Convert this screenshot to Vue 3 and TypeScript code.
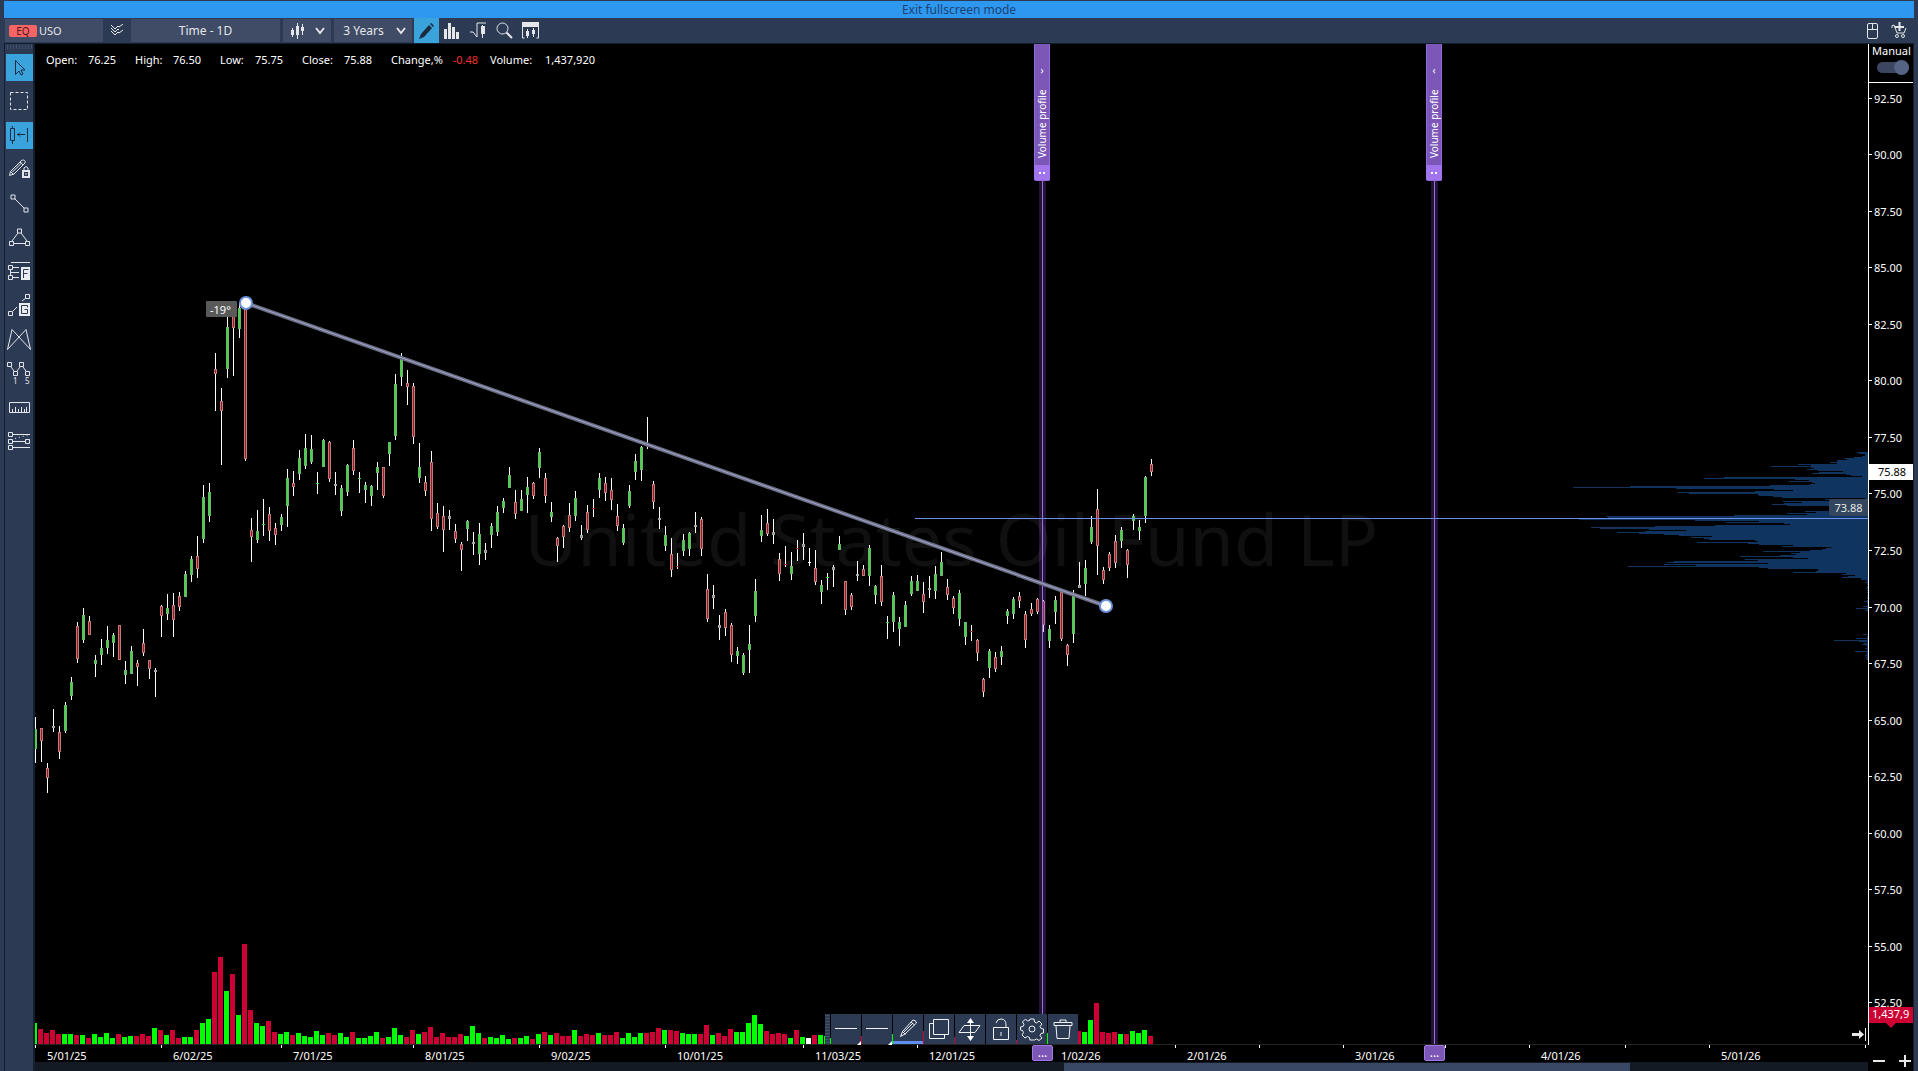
<script setup lang="ts">
import { ref } from 'vue'

interface Candle { x: number; kind: string; high: number; top: number; bottom: number; low: number }
interface VolumeBar { x: number; kind: string; height: number }

const STEP = 6
const FIRST_X = 35
const VOLUME_BASE = 1044

// kind, high, body top, body bottom, low - u: up, d: down, n: neutral, w: unchanged
const candleRows = `
u 717 729 749 763|d 728 728 741 762|d 763 768 778 793|n 709 726 728 732|d 726 732 752 759|u 702 705 731 733
u 677 682 696 700|d 622 626 659 663|u 608 615 640 643|d 616 621 635 635|u 655 660 664 677|u 639 648 655 665
u 626 640 648 654|u 633 635 643 657|d 625 625 660 660|u 661 670 675 684|u 646 651 674 674|d 660 663 667 686
d 629 643 653 656|d 660 660 669 679|n 668 670 672 697|d 605 606 616 637|u 594 608 614 620|d 593 605 620 637
d 592 596 607 611|u 571 574 597 597|u 556 559 575 582|d 536 556 569 578|u 485 497 539 543|u 483 492 516 522
d 353 369 374 411|d 388 401 411 465|u 315 327 369 378|d 305 310 328 376|u 303 308 329 338|d 300 308 459 461
d 518 530 537 562|u 510 531 540 543|u 499 524 525 536|d 507 514 531 541|d 523 528 535 545|u 514 517 525 531
u 469 478 506 527|d 471 483 487 496|u 450 458 474 480|u 434 448 466 469|u 435 449 462 464|u 472 483 484 494
u 439 440 467 467|d 441 442 479 482|n 472 484 486 495|u 485 488 511 516|u 464 465 492 496|d 440 448 471 475
u 472 478 479 493|u 482 485 490 503|u 485 486 496 506|u 462 467 473 490|d 467 467 496 498|u 442 442 454 466
u 374 384 436 440|u 353 357 377 386|d 370 383 387 405|d 383 386 437 444|u 443 467 478 483|d 476 482 491 496
d 451 462 519 531|d 503 513 527 529|d 506 516 530 552|n 510 516 519 530|d 524 531 539 543|d 542 544 550 571
u 520 521 529 541|n 532 542 544 555|u 523 534 554 565|n 543 550 553 560|u 523 526 535 548|u 506 512 532 536
u 498 501 508 513|u 467 475 488 488|d 490 502 514 519|u 490 499 511 511|u 477 487 495 513|d 482 483 496 499
u 448 452 468 478|d 473 478 496 503|u 502 512 517 522|d 537 538 546 562|d 525 526 537 548|d 503 515 528 532
u 491 498 516 521|n 525 535 538 540|d 505 512 530 533|d 499 508 509 517|u 473 478 490 498|d 477 483 493 501
d 478 490 500 510|d 504 516 526 531|u 524 528 543 545|u 485 491 506 508|u 454 461 472 480|u 446 447 470 481
d 417 446 447 449|d 481 484 502 509|n 507 518 520 529|u 526 535 546 551|d 538 554 570 577|d 553 566 567 569
u 534 540 551 556|u 532 533 549 556|n 512 525 527 533|d 517 519 549 556|d 574 589 619 622|n 585 595 598 609
n 615 625 628 640|d 609 612 628 636|d 623 625 655 662|u 647 651 656 664|u 653 655 673 675|u 625 644 650 673
u 579 591 616 622|u 515 530 536 542|d 509 523 534 536|n 519 532 535 544|d 553 559 574 581|d 546 564 565 567
u 552 566 574 580|d 540 548 549 561|n 533 544 547 560|w 548 562 563 566|d 550 568 582 585|u 580 585 592 604
u 573 577 578 590|n 565 567 570 587|u 536 544 550 550|d 581 581 610 615|d 593 595 607 610|n 561 574 576 581
d 565 569 576 576|u 545 548 576 586|u 585 586 595 604|d 565 576 602 606|u 616 622 623 639|u 592 595 622 632
u 617 622 629 646|u 601 605 627 627|u 576 581 594 596|u 575 581 591 591|d 582 594 602 613|n 576 588 590 598
u 566 574 591 599|u 552 562 576 576|d 579 587 595 600|d 596 598 608 614|u 590 593 619 626|u 622 622 637 645
d 625 631 632 641|d 639 640 653 661|d 678 679 692 697|u 649 651 668 678|d 652 657 669 672|u 646 651 657 665
u 609 611 616 624|u 597 599 614 619|d 592 596 601 608|d 611 614 640 648|d 603 609 614 616|d 598 599 612 614
d 600 601 625 632|u 625 629 641 648|u 596 600 612 624|d 589 592 639 641|d 644 645 655 666|u 590 593 634 643
n 562 585 588 588|u 560 568 584 596|u 516 527 542 544|d 489 509 546 575|d 567 570 580 584|d 552 554 568 571
d 535 541 563 568|u 527 530 541 548|d 549 550 565 578|u 514 516 521 530|u 520 527 531 540|u 476 477 516 523
d 459 464 472 476`

const candles: Candle[] = candleRows.trim().split(/[|\n]/).map((row, i) => {
  const [kind, high, top, bottom, low] = row.trim().split(' ')
  return { x: FIRST_X + i * STEP, kind, high: +high, top: +top, bottom: +bottom, low: +low }
})

const volumeRows = `
u21 d15 d11 d14 d10 u10 u10 d9 u9 d6 u10 u7 u11 u6 d10 u7 u8 d8 d10 d8 u16 d14 u9 d14 d6 u7 u7 d14 u21 u25
d72 d87 u53 d70 u29 d100 d34 u21 u18 d23 d12 u10 u12 d9 u11 u8 u7 u13 u9 d11 d9 u11 u7 d12 u6 u6 u8 u12 d6 u7
u16 u9 d7 d14 u10 d12 d17 d7 d11 d7 d7 d10 u8 u18 u11 d6 u7 u6 u9 u5 d6 u6 u8 d5 u10 d12 u9 d11 d8 d8
u14 d8 d10 d9 u11 d9 d9 d12 u6 u11 u7 u11 d11 d12 d16 u14 d14 d13 u11 u10 u10 d10 d19 u9 d11 d8 d15 u12 u12 u21
u29 u20 d13 d10 d11 d10 u6 d14 u7 w6 d9 u9 u8 u6 u8 d9 d8 d7 d8 u9 u8 d9 u9 u10 u8 u9 u8 u7 d13 d8
u9 u8 d7 d7 u9 u8 d8 d9 d10 u8 d8 u8 u7 u6 d4 d8 d6 d7 d9 u11 u10 d12 d9 u10 d13 u12 u24 d41 d12 d11
d12 u10 d10 u13 u11 u14 d8`

const volumes: VolumeBar[] = volumeRows.trim().split(/\s+/).map((v, i) => ({
  x: FIRST_X + i * STEP - 3, kind: v[0], height: +v.slice(1),
}))

// width of each one-pixel price level of the volume profile, from y = 452 down
const profileStart = 452
const profileWidths = [
  11, 9, 3, 3, 6, 14, 24, 21, 31, 31, 38, 31, 70, 57, 97, 57, 54, 61, 50, 25, 49, 56, 22, 17, 6, 144, 164, 73, 59,
  79, 56, 53, 58, 98, 238, 295, 192, 94, 75, 113, 190, 179, 110, 109, 95, 86, 3, 43, 26, 85, 66, 84, 96, 81, 29,
  26, 26, 22, 37, 63, 52, 81, 61, 134, 262, 260, 288, 289, 173, 109, 142, 84, 78, 153, 213, 277, 268, 219, 182,
  223, 251, 229, 204, 189, 156, 177, 164, 159, 113, 110, 171, 120, 109, 75, 86, 37, 42, 46, 58, 105, 68, 77, 72,
  88, 128, 75, 60, 123, 110, 194, 201, 100, 204, 172, 240, 109, 100, 50, 50, 52, 75, 22, 26, 13, 20, 26, 7, 7, 2,
  1, 3, 1, 1, 0, 1, 1, 2, 0, 1, 0, 1, 0, 0, 1, 0, 1, 1, 0, 1, 4, 1, 1, 0, 1, 5, 1, 12, 1, 3, 0, 0, 0, 0, 0, 0, 0, 0,
  0, 0, 0, 0, 0, 0, 0, 0, 0, 0, 0, 0, 0, 0, 0, 5, 0, 1, 1, 12, 1, 34, 9, 1, 4, 6, 2, 1, 1, 3, 1, 1, 13, 1, 2, 1, 3,
  1, 2, 1, 2,
]

const priceLabels = Array.from({ length: 17 }, (_, i) => ({
  text: (92.5 - i * 2.5).toFixed(2), y: Math.round(97.7 + i * 56.54),
}))

const dateLabels = [
  { x: 35, text: '5/01/25' }, { x: 161, text: '6/02/25' }, { x: 281, text: '7/01/25' }, { x: 413, text: '8/01/25' },
  { x: 539, text: '9/02/25' }, { x: 665, text: '10/01/25' }, { x: 803, text: '11/03/25' }, { x: 917, text: '12/01/25' },
  { x: 1049, text: '1/02/26' }, { x: 1175, text: '2/01/26' }, { x: 1259, text: '' }, { x: 1343, text: '3/01/26' },
  { x: 1445, text: '' }, { x: 1529, text: '4/01/26' }, { x: 1625, text: '' }, { x: 1709, text: '5/01/26' },
  { x: 1865, text: '' },
]

const quotes = [
  { label: 'Open:', value: '76.25', cls: 'w-a' }, { label: 'High:', value: '76.50', cls: 'w-b' },
  { label: 'Low:', value: '75.75', cls: 'w-e' }, { label: 'Close:', value: '75.88', cls: 'w-a' },
  { label: 'Change,%', value: '-0.48', cls: 'w-c' }, { label: 'Volume:', value: '1,437,920', cls: 'w-d' },
]

const markers = [{ x: 1042, arrow: '›' }, { x: 1434, arrow: '‹' }]
const PLOT_WIDTH = 1833
const fromLeft = (x: number) => `${((x - FIRST_X) / PLOT_WIDTH) * 100}%`

const manual = ref(true)
</script>

<template>
  <div class="app">
    <button class="exit" type="button">Exit fullscreen mode</button>

    <header class="toolbar">
      <button class="cell symbol" type="button"><span class="badge">EQ</span><span>USO</span></button>
      <button class="icon-btn compare" type="button" aria-label="Compare">
        <svg width="14" height="13" viewBox="0 0 14 13"><path d="M1 1l4 4 3-3 1 1 4-3M1 7l4 4 3-3 1 1 4-3M1 4l4 4 3-3 1 1" /></svg>
      </button>
      <button class="cell period" type="button">Time - 1D</button>
      <button class="cell type" type="button" aria-label="Chart type">
        <svg width="16" height="18" viewBox="0 0 16 18">
          <path d="M2.500 6v9M7.500 1v16M12.500 2v11" /><path class="solid" d="M1 8h3v5H1zM6 4h3v9H6zM11 5h3v4h-3z" />
        </svg>
        <svg width="10" height="8" viewBox="0 0 10 8"><path class="thick" d="M1 1l4 5 4-5" /></svg>
      </button>
      <button class="cell range" type="button">
        <span>3 Years</span>
        <svg width="10" height="8" viewBox="0 0 10 8"><path class="thick" d="M1 1l4 5 4-5" /></svg>
      </button>
      <button class="icon-btn draw active" type="button" aria-label="Drawing tools">
        <svg width="18" height="18" viewBox="0 0 18 18"><path class="ink" d="M1 17l2-5 8-9 3 3-8 9zM12 2l1-1q1 0 3 3l-1 1z" /></svg>
      </button>
      <button class="icon-btn tool" type="button" aria-label="Indicators">
        <svg width="16" height="16" viewBox="0 0 16 16"><path class="solid" d="M0 6h3v10H0zM4 0h3v16H4zM8 4h3v12H8zM12 9h3v7h-3z" /></svg>
      </button>
      <button class="icon-btn tool" type="button" aria-label="Trading">
        <svg width="16" height="18" viewBox="0 0 16 18"><path d="M0 10h3l4 5V1h9M12.500 3v13" /><path class="solid" d="M11 4h4v8h-4z" /></svg>
      </button>
      <button class="icon-btn tool" type="button" aria-label="Zoom">
        <svg width="17" height="17" viewBox="0 0 17 17"><circle cx="6.500" cy="6.500" r="5.500" /><path class="thick" d="M10.500 10.500L16 16" /></svg>
      </button>
      <button class="icon-btn tool" type="button" aria-label="Panels">
        <svg width="17" height="17" viewBox="0 0 17 17">
          <path d="M.5 1v15h2M16.500 1v15h-2M5.500 7v9M11.500 6v9" /><path class="solid" d="M0 0h17v5H0zM4 9h3v5H4zM10 8h3v4h-3z" />
        </svg>
      </button>
      <span class="spacer"></span>
      <button class="icon-btn tool" type="button" aria-label="Mouse trading">
        <svg width="12" height="16" viewBox="0 0 12 16"><rect x=".5" y=".5" width="10" height="15" rx="1.500" /><path d="M1 6.500h10M5.500 1v5" /></svg>
      </button>
      <button class="icon-btn tool" type="button" aria-label="Order">
        <svg width="17" height="17" viewBox="0 0 17 17">
          <path d="M1 6q-1-3 2-3l3 8h7l2-5" /><path class="thick" d="M8.500 0v9M4 5h9" /><circle cx="6" cy="14" r="1.500" /><circle cx="12" cy="14" r="1.500" />
        </svg>
      </button>
    </header>

    <div class="body">
      <nav class="tools" aria-label="Drawing tools">
        <span class="grip"></span>
        <button class="active" type="button" aria-label="Pointer">
          <svg viewBox="0 0 27 27"><path class="dark" d="M9.500 6.500v14l3.500-3.500 2 4 2-1-2-4h4z" /></svg>
        </button>
        <button type="button" aria-label="Select area">
          <svg viewBox="0 0 27 27"><rect x="4.500" y="4.500" width="17" height="17" stroke-dasharray="3 2" /></svg>
        </button>
        <button class="active" type="button" aria-label="Snap to bar">
          <svg viewBox="0 0 27 27"><path class="dark" d="M6.500 4v3M6.500 19v3M4.500 6.500h4v12h-4zM21.500 6v14M11 12.500h8M14 10.500l-2 2 2 2" /></svg>
        </button>
        <button type="button" aria-label="Lock drawing">
          <svg viewBox="0 0 27 27"><path d="M3.500 19.500l1-4L16 4q4 0 3 3L8 18zM4.500 15.500l3 3M14 6l3 3M6.500 16L16 6.500" /><rect class="thick" x="17" y="15" width="6" height="6" /><path d="M18 14v-2q2-3 4 0v2M20 17v2" /></svg>
        </button>
        <button type="button" aria-label="Line">
          <svg viewBox="0 0 27 27"><path d="M5 5h4v4H5zM18 18h4v4h-4zM9 9l9 9" /></svg>
        </button>
        <button type="button" aria-label="Shape">
          <svg viewBox="0 0 27 27"><path d="M11.500 5h4v4h-4zM3.500 17.500h4v4h-4zM19.500 17.500h4v4h-4zM12 9l-6 8M15 9l6 8M8 19.500h11" /></svg>
        </button>
        <button type="button" aria-label="Fibonacci">
          <svg viewBox="0 0 27 27"><path d="M5 4.500h19M2.500 7.500h4v4h-4zM2.500 17.500h4v4h-4zM7 9.500h6M5 14.500h8M7 19.500h6M4.500 12v6" /><path class="solid" d="M15 9h9v13h-9z" /><path class="cut" d="M17.500 20v-8.500h5M17.500 15.500h4" /></svg>
        </button>
        <button type="button" aria-label="Gann">
          <svg viewBox="0 0 27 27"><path d="M19.500 2.500h4v4h-4zM2.500 19.500h4v4h-4zM7 19l4-4M16 9l4-3" /><path class="solid" d="M13 11h11v13H13z" /><path class="cut" d="M21.500 15.500v-2h-6v8h6v-4h-3" /></svg>
        </button>
        <button type="button" aria-label="Pattern">
          <svg viewBox="0 0 27 27"><path d="M1.500 23.500L6 3.500l18.500 20L20 3.500z" /></svg>
        </button>
        <button type="button" aria-label="Elliott waves">
          <svg viewBox="0 0 27 27"><path d="M1.500 2.500h4v4h-4zM7.500 11.500h4v4h-4zM13.500 2.500h4v4h-4zM19.500 11.500h4v4h-4zM5 7l3 4M11 11l3-4M17 7l3 4" /><text class="mini" x="7" y="24">1</text><text class="mini" x="19" y="24">5</text></svg>
        </button>
        <button type="button" aria-label="Ruler">
          <svg viewBox="0 0 27 27"><path d="M3.500 8.500h20v10h-20zM6.500 18v-3M9.500 18v-5M12.500 18v-3M15.500 18v-5M18.500 18v-3M20.500 18v-5" /></svg>
        </button>
        <button type="button" aria-label="Channels">
          <svg viewBox="0 0 27 27"><path d="M2.500 4.500h4v4h-4zM2.500 11.500h4v4h-4zM2.500 17.500h4v4h-4zM19.500 11.500h4v4h-4zM7 6.500h17M7 13.500h12M7 19.500h17" /><path d="M9 10.500L22 7" stroke-dasharray="1 3" /></svg>
        </button>
      </nav>

      <main class="main">
        <div class="upper">
          <section class="plot">
            <div class="watermark">United States Oil Fund LP</div>
            <svg class="canvas" viewBox="35 44 1833 1001" preserveAspectRatio="none">
              <g shape-rendering="crispEdges">
                <g class="profile">
                  <rect v-for="(w, i) in profileWidths" :key="i" :x="1868 - w" :y="profileStart + i" :width="w" height="1" />
                </g>
                <g v-for="c in candles" :key="c.x" :class="['candle', c.kind]">
                  <rect class="wick" :x="c.x" :y="c.high" width="1" :height="c.low - c.high" />
                  <rect v-if="c.bottom - c.top < 2" class="core" :x="c.x - 1" :y="c.top" width="3" height="1" />
                  <template v-else>
                    <rect class="shell" :x="c.x - 1" :y="c.top" width="3" :height="c.bottom - c.top" />
                    <rect class="core" :x="c.x" :y="c.top + 1" width="1" :height="Math.max(c.bottom - c.top - 2, 0)" />
                  </template>
                </g>
                <rect v-for="v in volumes" :key="v.x" :class="['volume', v.kind]" :x="v.x" :y="VOLUME_BASE - v.height" width="5" :height="v.height" />
                <rect x="35" y="1044" width="1833" height="1" fill="#242424" />
                <g v-for="m in markers" :key="m.x">
                  <rect :x="m.x - 3" y="181" width="7" height="863" fill="#8c50dc" fill-opacity=".25" />
                  <rect :x="m.x" y="181" width="1" height="863" fill="#9a70de" />
                </g>
                <rect x="915" y="518" width="953" height="1" fill="#6a90ec" />
              </g>
              <path class="trend-outer" d="M246 303L1106 606" />
              <path class="trend-inner" d="M246 303L1106 606" />
              <rect x="206" y="301" width="31" height="16" rx="1" fill="#5a5a5a" />
              <text class="angle" x="210" y="314">-19°</text>
              <circle class="handle" cx="246" cy="303" r="6" />
              <circle class="handle" cx="1106" cy="606" r="6" />
              <path d="M1852 1033h7v-3l5 4.500-5 4.500v-3h-7z" fill="#e8e8e8" /><path d="M1865.500 1028v13" stroke="#e8e8e8" />
            </svg>

            <dl class="quotes">
              <div v-for="q in quotes" :key="q.label" :class="q.cls">
                <dt>{{ q.label }}</dt><dd :class="{ negative: q.value.startsWith('-') }">{{ q.value }}</dd>
              </div>
            </dl>

            <div v-for="m in markers" :key="m.x" class="marker" :style="{ left: fromLeft(m.x - 8) }">
              <span class="arrow">{{ m.arrow }}</span><span class="name">Volume profile</span>
              <span class="hold"><i></i><i></i></span>
            </div>
            <span class="level">73.88</span>

            <div class="float">
              <span class="fgrip"></span>
              <button class="menu" type="button" aria-label="Line style"><svg viewBox="0 0 30 30"><path d="M4 14.500h22" /></svg></button>
              <button class="menu" type="button" aria-label="Line width"><svg viewBox="0 0 30 30"><path d="M4 14.500h22" /></svg></button>
              <button class="on" type="button" aria-label="Color"><svg viewBox="0 0 30 30"><path d="M7.500 22.500l2-5L20 6q3 0 3.500 3L12 20zM9.500 17.500l3 3M18 8l3.500 3M10.500 18.500L20 9" /></svg></button>
              <button type="button" aria-label="Duplicate"><svg viewBox="0 0 30 30"><path d="M9.500 5.500h15v15h-15zM9.500 9.500h-4v15h15v-4" /></svg></button>
              <button type="button" aria-label="Move"><svg viewBox="0 0 30 30"><path d="M9 11.500h16l-5 7H4zM15.500 5v21" /><path class="fill" d="M12 9l3.500-5L19 9zM12 22l3.500 5 3.500-5z" /></svg></button>
              <button type="button" aria-label="Unlock"><svg viewBox="0 0 30 30"><path d="M7.500 13.500h15v12h-15zM10 9q1-4 5-4 5 0 5 6v3M15 18v4" /></svg></button>
              <button type="button" aria-label="Settings"><svg viewBox="0 0 30 30"><circle cx="15" cy="15" r="3" /><path class="wide" d="M13 5h4l.5 3 2 1 2.500-2 3 3-2 2.500 1 2 2.500.5v4l-2.500.5-1 2 2 2.500-3 2.500-2.500-1.500-2 1L17 26h-4l-.5-2.500-2-1L8 24l-3-3 1.500-2.500-1-2L3.500 16v-3l2.500-.5 1-2L5.500 8l3-3 2 2 2-.5z" /></svg></button>
              <button type="button" aria-label="Delete"><svg viewBox="0 0 30 30"><path class="wide" d="M6 8.500h18v3H6zM12 8V6h6v2M8 12l1 12.500h12L22 12" /></svg></button>
            </div>
          </section>

          <aside class="axis">
            <div class="mode">
              <label for="manual">Manual</label>
              <input id="manual" v-model="manual" type="checkbox" role="switch" />
            </div>
            <svg class="scale" viewBox="0 83 45 962" preserveAspectRatio="none">
              <g v-for="p in priceLabels" :key="p.y">
                <rect x="0" :y="p.y" width="4" height="1" fill="#fff" /><text x="6" :y="p.y + 5">{{ p.text }}</text>
              </g>
              <rect x="1" y="464" width="44" height="16" fill="#fff" /><text class="last" x="10" y="476">75.88</text>
              <path d="M1 1007h44v16H28l-5 5-5-5H1z" fill="#cc0033" /><text x="4" y="1018">1,437,9</text>
            </svg>
          </aside>
        </div>

        <footer class="foot">
          <div class="timeline">
            <svg class="dates" viewBox="35 1045 1833 17" preserveAspectRatio="none">
              <g v-for="d in dateLabels" :key="d.x">
                <rect :x="d.x" y="1045" width="1" height="3" fill="#fff" /><text :x="d.x + 12" y="1060">{{ d.text }}</text>
              </g>
            </svg>
            <button v-for="m in markers" :key="m.x" class="anchor" type="button" :style="{ left: fromLeft(m.x - 10) }">...</button>
            <div class="scroll"><span class="thumb"></span></div>
          </div>
          <div class="zoom">
            <button type="button" aria-label="Zoom out"><svg width="14" height="14"><path d="M1 7h12" /></svg></button>
            <button type="button" aria-label="Zoom in"><svg width="14" height="14"><path d="M1 7h12M7 1v12" /></svg></button>
          </div>
        </footer>
      </main>
    </div>
  </div>
</template>

<style>
body { background: #2c3b53; overflow: hidden; }
</style>

<style scoped>
.app { box-sizing: border-box; height: 100vh; padding: 1px 4px 0; display: flex; flex-direction: column; background: #2c3b53; color: #fff; font: 12px/16px "Noto Sans", "Open Sans", sans-serif; }
button { border: 0; padding: 0; margin: 0; background: none; color: inherit; font: inherit; cursor: pointer; }
svg { display: block; }
button svg { fill: none; }
.exit { flex: none; height: 17px; background: #2e97ef; color: #1c4374; line-height: 16px; }

.toolbar { flex: none; display: flex; align-items: stretch; height: 25px; padding-right: 2px; color: #e4e6ea; }
.toolbar path, .toolbar circle, .toolbar rect { stroke: #e4e6ea; }
.toolbar .solid { fill: #e4e6ea; stroke: none; }
.toolbar .thick { stroke-width: 2; }
.toolbar .ink { fill: #1c2c40; stroke: none; }
.cell { display: flex; align-items: center; justify-content: center; margin: 1px 3px 1px 0; background: #404b66; }
.symbol { width: 98px; margin-left: 1px; margin-right: 0; justify-content: flex-start; gap: 2px; padding-left: 4px; font-size: 11px; }
.badge { width: 28px; height: 12px; border-radius: 2px; background: #fb6464; color: #4a1420; font-size: 10px; line-height: 12px; text-align: center; }
.icon-btn { display: flex; align-items: center; justify-content: center; width: 26px; }
.compare { width: 28px; }
.period { width: 149px; }
.type { width: 48px; gap: 9px; }
.range { width: 78px; gap: 12px; padding-left: 3px; box-sizing: border-box; margin-right: 2px; }
.draw { width: 25px; }
.active { background: #3ba3dc; }
.spacer { flex: 1; }

.body { flex: 1; min-height: 0; display: flex; border-top: 1px solid #142030; }
.tools { flex: none; box-sizing: border-box; width: 31px; padding: 1px 0 0 1px; border-left: 1px solid #142030; border-right: 2px solid #142030; display: flex; flex-direction: column; align-items: center; gap: 7px; }
.grip { width: 27px; height: 4px; margin-bottom: -2px; background: radial-gradient(#5a6a84 30%, transparent 40%) 0 0 / 3px 2px; }
.tools button { width: 27px; height: 27px; flex: none; }
.tools svg { width: 27px; height: 27px; }
.tools path, .tools rect { stroke: #e2e6ec; }
.tools .dark { stroke: #1a2c42; }
.tools .thick { stroke-width: 2; }
.tools .solid { fill: #e8ebf0; stroke: none; }
.tools .cut { stroke: #2c3b53; }
.mini { fill: #e2e6ec; font-size: 8px; }

.main { flex: 1; min-width: 0; display: flex; flex-direction: column; background: #000; }
.upper { flex: 1; min-height: 0; display: flex; }
.plot { flex: 1; min-width: 0; position: relative; overflow: hidden; }
.watermark { position: absolute; inset: 0; display: flex; align-items: center; justify-content: center; padding-bottom: 14px; font-size: 72px; color: #101010; white-space: nowrap; }
.canvas { position: absolute; inset: 0; width: 100%; height: 100%; }
.profile rect { fill: #0f3460; }
.candle .wick { fill: #fff; }
.candle .shell { fill: #a8a8a8; }
.candle.u .shell { fill: #6cb46c; }
.candle.u .core { fill: #3ddc3d; }
.candle.d .shell { fill: #c07878; }
.candle.d .core { fill: #981c24; }
.candle.n .core { fill: #808080; }
.candle.w .core { fill: #fff; }
.volume.u { fill: #00ff00; }
.volume.d { fill: #cc0033; }
.volume.w { fill: #fff; }
.trend-outer { stroke: #6b6f80; stroke-width: 4; }
.trend-inner { stroke: #a3a3d8; stroke-width: 1; }
.handle { fill: #fff; stroke: #6d93dd; stroke-width: 2; }
.angle { fill: #fff; font-size: 11px; }

.quotes { position: absolute; left: 11px; top: 8px; margin: 0; display: flex; font-size: 11px; }
.quotes div { display: flex; justify-content: space-between; }
.quotes dd { margin: 0; }
.w-a { width: 70px; margin-right: 19px; }
.w-b { width: 66px; margin-right: 19px; }
.w-e { width: 63px; margin-right: 19px; }
.w-c { width: 87px; margin-right: 12px; }
.w-d { width: 105px; }
.negative { color: #f03030; }

.marker { position: absolute; top: 0; width: 16px; height: 137px; box-sizing: border-box; border: 1px solid #9468de; border-top: 0; border-radius: 0 0 2px 2px; background: #7c57b8; font-size: 10px; line-height: 14px; display: flex; flex-direction: column; align-items: center; }
.arrow { height: 44px; line-height: 52px; }
.name { flex: 1; margin-bottom: 6px; writing-mode: vertical-rl; transform: rotate(180deg); white-space: nowrap; text-align: center; }
.hold { display: flex; align-items: center; justify-content: center; gap: 2px; width: 16px; height: 15px; background: #a274ee; }
.hold i { width: 2px; height: 2px; background: #fff; }
.level { position: absolute; right: 0; top: 455px; width: 39px; height: 17px; border-radius: 3px 0 0 3px; background: #33465e; color: #e8e8e8; font-size: 11px; line-height: 17px; text-align: center; }

.float { position: absolute; left: 790px; bottom: 1px; height: 30px; display: flex; gap: 1px; }
.fgrip { width: 5px; background: radial-gradient(#5a6a84 30%, #2c3b53 40%) 0 0 / 2px 3px; }
.float button { position: relative; width: 30px; height: 30px; background: #2c3b53; }
.float svg { width: 30px; height: 30px; }
.float path, .float circle { stroke: #f0f2f5; }
.float .fill { fill: #fff; stroke: none; }
.float .on { box-shadow: inset 0 -3px #5f8ff2; }
.float .menu::after { content: ""; position: absolute; right: 0; bottom: -1px; border: 2px solid transparent; border-right-color: #fff; border-bottom-color: #fff; }

.axis { flex: none; box-sizing: border-box; width: 46px; border-right: 1px solid #142030; display: flex; flex-direction: column; font-size: 11px; }
.mode { box-sizing: border-box; height: 39px; border-left: 1px solid #fff; border-bottom: 1px solid #fff; padding-left: 3px; display: flex; flex-direction: column; font-size: 11px; line-height: 14px; }
.mode input { appearance: none; position: relative; width: 32px; height: 11px; margin: 4px 0 0 5px; border-radius: 6px; background: #3c4660; }
.mode input::after { content: ""; position: absolute; right: 0; top: -2px; width: 15px; height: 15px; border-radius: 8px; background: #556385; }
.scale { flex: 1; min-height: 0; width: 45px; box-shadow: inset 1px 0 #fff; }
.scale text { fill: #fff; font-size: 11px; }
.scale .last { fill: #000; }

.foot { flex: none; height: 26px; display: flex; }
.timeline { flex: 1; position: relative; display: flex; flex-direction: column; }
.dates { width: 100%; height: 17px; }
.dates text { fill: #fff; font-size: 11px; }
.anchor { position: absolute; top: 0; width: 21px; height: 16px; border: 1px solid #a07ae0; border-radius: 2px; background: #7c57b8; line-height: 12px; }
.scroll { height: 9px; background: #131a24; display: flex; }
.thumb { margin: 1px 0 0 56.140%; width: 30.880%; background: #384865; }
.zoom { width: 46px; flex: none; display: flex; align-items: center; justify-content: space-between; padding: 0 1px 0 4px; box-sizing: border-box; border-right: 1px solid #142030; }
.zoom button { height: 14px; margin-top: 6px; }
.zoom path { stroke: #e8e8e8; stroke-width: 2; }
</style>
